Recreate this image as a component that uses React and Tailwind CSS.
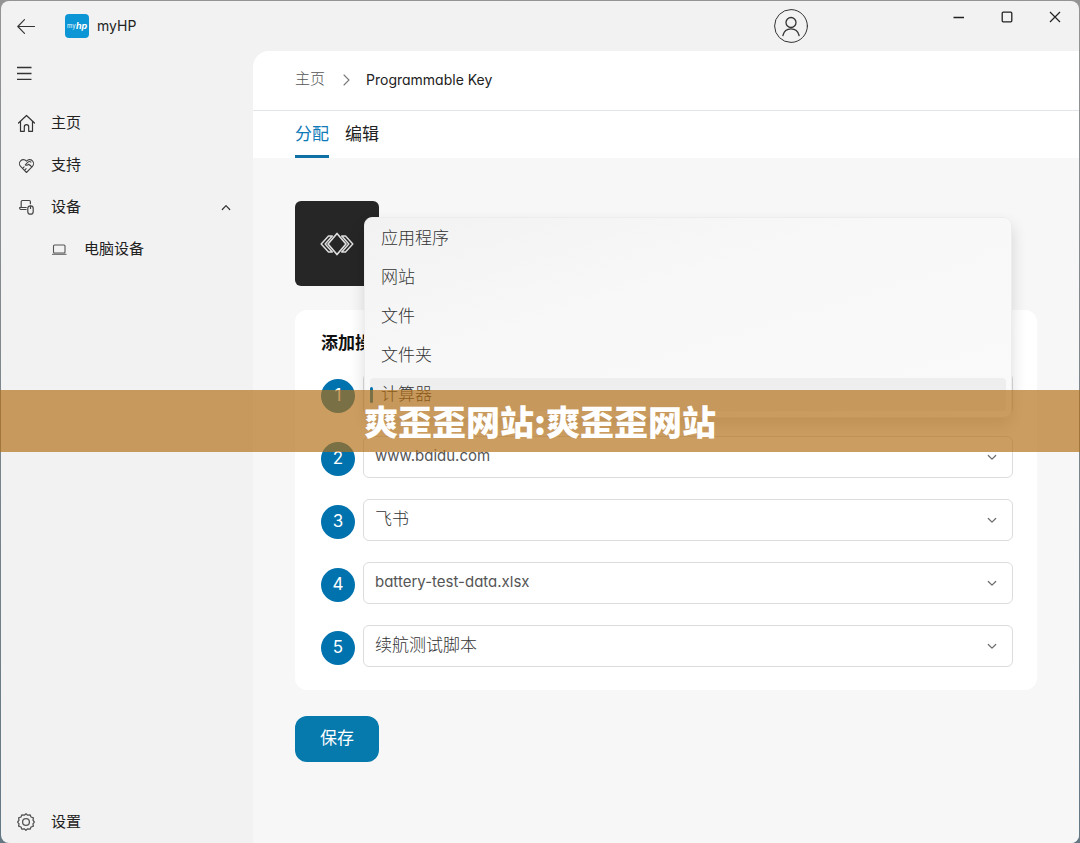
import {useState} from 'react';

const menuItems = ["应用程序", "网站", "文件", "文件夹", "计算器"];

//latin values are set a little smaller than the chinese ones
const savedActions = [
    { id: 1, value: "计算器" },
    { id: 2, value: "www.baidu.com", latin: true },
    { id: 3, value: "飞书" },
    { id: 4, value: "battery-test-data.xlsx", latin: true },
    { id: 5, value: "续航测试脚本" },
];

function HomeIcon() {
    return (
        <svg width="18" height="18" viewBox="0 0 18 18" fill="none" stroke="#333" strokeWidth="1.2" strokeLinejoin="round" strokeLinecap="round">
            <path d="M1.500 9 9.500 1.500l8 7.500M3.500 7.500v9.800h3.800v-4.400a2.200 2.200 0 0 1 4.400 0v4.400h3.800V7.500" />
        </svg>
    );
}

function SupportIcon() {
    return (
        <svg width="18" height="18" viewBox="0 0 18 18" fill="none" stroke="#444" strokeWidth="1.1" strokeLinejoin="round" strokeLinecap="round">
            <path d="M9.500 16.500 3.600 10.400a4 4 0 0 1 0-5.600c1.600-1.600 4.200-1.600 5.900.3 1.700-1.900 4.300-1.900 5.900-.3a4 4 0 0 1 0 5.600z" />
            <path d="M14.800 10.900c-1.300-1.300-2.600-2.300-3.300-2.500-1 .9-2.400 1.300-3.200.4l2.400-2.500c1-.9 2.300-.9 3.200-.2M5.500 12.300l1.600-1.500M7.500 14.300l1.600-1.600" />
        </svg>
    );
}

function DevicesIcon() {
    return (
        <svg width="18" height="18" viewBox="0 0 18 18" fill="none" stroke="#444" strokeWidth="1.2" strokeLinejoin="round" strokeLinecap="round">
            <path d="M4.200 9.500V3.700c0-.7.4-1.200 1.200-1.200h6.800c.8 0 1.200.5 1.200 1.200v2M2.700 9.500h6.500M2.700 9.500v.8c0 .7.500 1.200 1.200 1.200h5.300" />
            <rect x="10.800" y="7.800" width="5.400" height="8.400" rx="2.500" />
            <path d="M13.500 8v2.500" />
        </svg>
    );
}

function LaptopIcon() {
    return (
        <svg width="16" height="16" viewBox="0 0 16 16" fill="none" stroke="#555" strokeWidth="1.100" strokeLinecap="round">
            <rect x="2.500" y="4" width="11.500" height="8" rx="1" />
            <path d="M1.500 13.200h13.500" />
        </svg>
    );
}

function GearIcon() {
    return (
        <svg width="20" height="20" viewBox="0 0 20 20" fill="none" stroke="#555" strokeWidth="1.300" strokeLinejoin="round">
            <path d="M8.300 3.200 10 1.700l1.700 1.500 2.400-.4.900 2.200 2.400.8-.4 2.400L18.300 10 17 11.800l.4 2.400-2.400.8-.9 2.200-2.400-.4L10 18.300l-1.700-1.500-2.400.4L5 15l-2.400-.8.4-2.400L1.700 10 3 8.200l-.4-2.400L5 5l.9-2.200z" />
            <circle cx="10" cy="10" r="3.400" />
        </svg>
    );
}

function Chevron({ color = "#6b6b6b", up = false }) {
    return (
        <svg width="12" height="12" viewBox="0 0 12 12" fill="none" stroke={color} strokeWidth="1.200" strokeLinecap="round" strokeLinejoin="round">
            <path d={up ? "M2.300 8.500l3.700-3.800 3.700 3.800" : "M2.300 4.500l3.700 3.700 3.700-3.700"} />
        </svg>
    );
}

function TitleBar() {
    return (
        <header className="flex h-[50px] shrink-0 items-start">
            <div className="flex h-full flex-1 items-center pl-4">
                <button aria-label="Back" className="mr-[30px]">
                    <svg width="18" height="16" viewBox="0 0 18 16" fill="none" stroke="#333" strokeWidth="1.100" strokeLinecap="round" strokeLinejoin="round">
                        <path d="M17.500 8.500H.8M7.500 1.700.8 8.500l6.700 6.800" />
                    </svg>
                </button>
                <span className="mr-2 flex size-6 items-center justify-center rounded-sm bg-[#0c96d6]">
                    <svg width="24" height="24" viewBox="0 0 24 24" fill="#fff" aria-hidden="true">
                        <text x="2" y="14" fontSize="6" fontFamily="Inter, sans-serif">my</text>
                        <text x="11" y="15" fontSize="9" fontWeight="700" fontStyle="italic" fontFamily="Inter, sans-serif">hp</text>
                    </svg>
                </span>
                <h1 className="text-sm text-[#222]">myHP</h1>
            </div>
            <button aria-label="Account" className="mt-2 mr-[127px]">
                <svg width="34" height="34" viewBox="0 0 34 34" fill="none" stroke="#333" strokeWidth="1" strokeLinecap="round">
                    <circle cx="17" cy="17" r="16.400" />
                    <circle cx="17" cy="13.500" r="5" strokeWidth="1.300" />
                    <path d="M8.900 26.500c1-4.200 4.200-6.600 8.100-6.600s7.100 2.400 8.100 6.600" strokeWidth="1.300" />
                </svg>
            </button>
            <div className="flex text-[#222]">
                <button aria-label="Minimize" className="flex h-8 w-12 items-center justify-center">
                    <svg width="12" height="12" stroke="currentColor" strokeWidth="1.300"><path d="M.5 6.500H11" /></svg>
                </button>
                <button aria-label="Maximize" className="flex h-8 w-12 items-center justify-center">
                    <svg width="12" height="12" fill="none" stroke="currentColor" strokeWidth="1.300"><rect x="1.200" y="1.200" width="9.600" height="9.600" rx="1" /></svg>
                </button>
                <button aria-label="Close" className="flex h-8 w-12 items-center justify-center">
                    <svg width="12" height="12" stroke="currentColor" strokeWidth="1.200"><path d="M1 1l10 10M11 1 1 11" /></svg>
                </button>
            </div>
        </header>
    );
}

function SideBar() {
    return (
        <nav className="flex w-[252px] shrink-0 flex-col text-[15px] text-[#222]">
            <button aria-label="Menu" className="flex h-[44px] items-center pl-4">
                <svg width="15" height="14" stroke="#333" strokeWidth="1.300"><path d="M0 1.500h14.500M0 7.500h14.500M0 13.300h14.500" /></svg>
            </button>
            <ul className="mt-[7px]">
                <li>
                    <a href="#home" className="flex h-[42px] items-center gap-4 pl-4"><HomeIcon />主页</a>
                </li>
                <li>
                    <a href="#support" className="flex h-[42px] items-center gap-4 pl-4"><SupportIcon />支持</a>
                </li>
                <li>
                    <button className="flex h-[42px] w-full items-center gap-4 pr-[21px] pl-4">
                        <DevicesIcon />
                        <span className="flex-1 text-left">设备</span>
                        <Chevron color="#333" up />
                    </button>
                </li>
                <li>
                    <a href="#pc" className="flex h-[42px] items-center gap-[17px] pl-[50px]"><LaptopIcon />电脑设备</a>
                </li>
            </ul>
            <a href="#settings" className="mt-auto flex h-[42px] items-center gap-[15px] pl-[15px]"><GearIcon />设置</a>
        </nav>
    );
}

//open list of the first action, lies over the card
function ActionMenu({ selected, onSelect }) {
    return (
        <div role="listbox" aria-label="操作" className="absolute inset-x-px -bottom-[3px] rounded-lg border border-[#ededed] bg-linear-to-br from-[#f2f2f2] via-[#f8f8f8] via-40% to-[#fafafa] pt-px pb-[3px] shadow-[0_8px_16px_rgba(0,0,0,0.14)]">
            {menuItems.map((item) => (
                <div key={item} className="h-[39px] px-[5px] py-[3px]">
                    <button
                        role="option"
                        aria-selected={item === selected}
                        onClick={() => onSelect(item)}
                        className={item === selected
                            ? "flex size-full items-center rounded bg-[#eeeeee] text-left"
                            : "flex size-full items-center rounded text-left"}
                    >
                        <span className={item === selected ? "mr-2 h-4 w-[3px] rounded-full bg-[#0073ae]" : "mr-2 w-[3px]"} />
                        {item}
                    </button>
                </div>
            ))}
        </div>
    );
}

function ActionRow({ id, value, latin, children }) {
    return (
        <div className="flex items-center gap-2">
            <label htmlFor={`action-${id}`} className="mb-[2px] flex size-[34px] shrink-0 items-center justify-center self-end rounded-full bg-[#0073ae] text-[17px] font-normal text-white">
                {id}
            </label>
            <div className="relative flex-1 text-[17px] text-[#333]">
                <select
                    id={`action-${id}`}
                    className={latin
                        ? "block h-[42px] w-full appearance-none rounded-md border border-[#dcdcdc] bg-white pr-8 pb-px pl-[11px] text-[15px] font-normal text-[#555]"
                        : "block h-[42px] w-full appearance-none rounded-md border border-[#dcdcdc] bg-white pr-8 pb-px pl-[11px]"}
                >
                    <option>{value}</option>
                </select>
                <span className="pointer-events-none absolute inset-y-0 right-[15px] flex items-center">
                    <Chevron />
                </span>
                {children}
            </div>
        </div>
    );
}

export default function App() {
    const [selected, setSelected] = useState("计算器");

    return (
        <div className="flex min-h-screen bg-linear-to-b from-[#949494] to-[#647884] px-px pt-px font-['Inter','Noto_Sans_CJK_SC',sans-serif] [font-feature-settings:'cv11']">
            <div className="flex flex-1 flex-col overflow-hidden rounded-lg bg-[#f2f2f2]">
                <TitleBar />
                <div className="flex flex-1">
                    <SideBar />
                    <div className="flex-1 overflow-hidden rounded-tl-2xl bg-[#f7f7f7]">
                        <div className="bg-white">
                            <div className="flex h-[60px] items-center border-b border-[#e3e6e8] pb-[2px] pl-[42px]">
                                <a href="#home" className="text-[15px] font-light text-[#555]">主页</a>
                                <svg width="7" height="12" viewBox="0 0 7 12" fill="none" stroke="#777" strokeWidth="1.100" strokeLinecap="round" className="mr-4 ml-[18px]">
                                    <path d="M1 1l5 5-5 5" />
                                </svg>
                                <span className="text-sm text-[#222]">Programmable Key</span>
                            </div>
                            <div role="tablist" className="flex gap-4 pl-[42px] text-[17px] leading-[42px]">
                                <button role="tab" aria-selected="true" className="border-b-3 border-[#0f71a6] pt-[2px] text-[#0f7ab8]">分配</button>
                                <button role="tab" aria-selected="false" className="border-b-3 border-transparent pt-[2px] text-[#222]">编辑</button>
                            </div>
                        </div>

                        <main className="pt-[43px] pr-[42px] pb-20 pl-[42px] font-light">
                            {/* KEY TILE */}
                            <div className="flex h-[85px] w-[84px] items-center justify-center rounded-md bg-[#262626]">
                                <svg width="34" height="24" viewBox="0 0 34 24" fill="none" stroke="#ddd" strokeWidth="1.700" strokeLinejoin="round">
                                    <path d="M17 1.500 26 12l-9 10.500L8 12z" />
                                    <path d="M12.300 4H8.500L1.200 12l7.300 8h3.800L5.200 12zM21.700 4h3.800l7.300 8-7.300 8h-3.800l7.100-8z" strokeWidth="1.500" />
                                </svg>
                            </div>

                            <section className="mt-6 rounded-xl bg-white pt-5 pr-6 pb-[23px] pl-[26px]">
                                <h2 className="mb-[17px] text-[17px] leading-[26px] font-bold text-[#111]">添加操作</h2>
                                <div className="flex flex-col gap-[21px]">
                                    {savedActions.map((action, i) => (
                                        <ActionRow key={action.id} id={action.id} value={action.value} latin={action.latin}>
                                            {i === 0 && <ActionMenu selected={selected} onSelect={setSelected} />}
                                        </ActionRow>
                                    ))}
                                </div>
                            </section>

                            <button className="mt-[26px] h-[46px] w-[84px] rounded-xl bg-[#0679ad] text-[17px] font-normal text-white">保存</button>
                        </main>
                    </div>
                </div>
            </div>

            {/* banner across the middle of the window */}
            <div className="pointer-events-none absolute inset-0 flex items-center pb-px">
                <p className="h-[62px] w-full bg-[#b36e14]/68 text-center font-['Noto_Sans_CJK_SC',sans-serif] text-[34px] leading-[62px] font-black text-white">
                    爽歪歪网站:爽歪歪网站
                </p>
            </div>
        </div>
    );
}
